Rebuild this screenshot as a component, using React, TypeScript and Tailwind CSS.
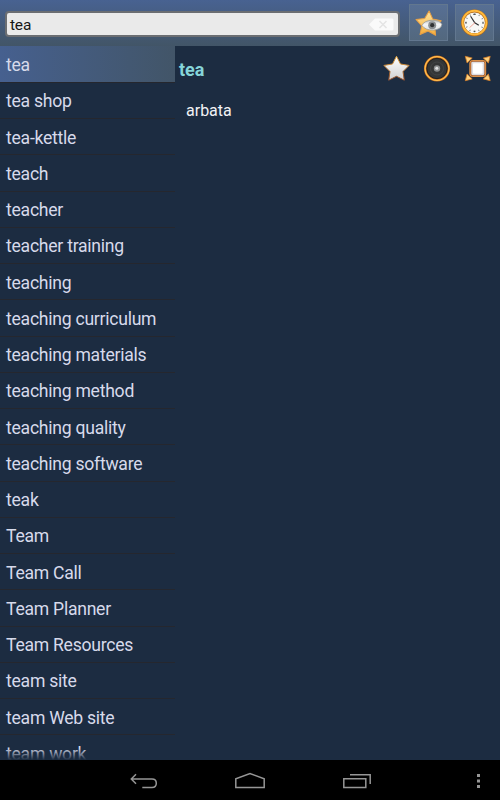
const words: string[] = [
  'tea', 'tea shop', 'tea-kettle', 'teach', 'teacher', 'teacher training', 'teaching',
  'teaching curriculum', 'teaching materials', 'teaching method', 'teaching quality',
  'teaching software', 'teak', 'Team', 'Team Call', 'Team Planner', 'Team Resources',
  'team site', 'team Web site', 'team work',
];

const starPoints = '13,.8 17,8.5 25.6,9.9 19.5,16.1 20.8,24.7 13,20.8 5.2,24.7 6.5,16.1 .4,9.9 9,8.5';

function FavouritesIcon() {
  return (
    <svg width="28" height="28" viewBox="0 0 28 28">
      <defs>
        <linearGradient id="gold" x1="0" y1="0" x2="0" y2="1">
          <stop offset="0" stopColor="#ffe6a0" />
          <stop offset="1" stopColor="#f7ae3a" />
        </linearGradient>
        <linearGradient id="eye" x1="0" y1="0" x2="0" y2="1">
          <stop offset="0" stopColor="#b9bcbd" />
          <stop offset=".4" stopColor="#f4f5f6" />
          <stop offset="1" stopColor="#dfe3e6" />
        </linearGradient>
      </defs>
      <polygon points={starPoints} transform="translate(.4 1.2) rotate(3 13 14)" fill="url(#gold)" stroke="#e9a044" strokeWidth="1" strokeLinejoin="round" />
      <path d="M7 16.6C9 9.6 25 9.6 26.9 15.5C26.2 22.6 11 23 7 16.6Z" fill="url(#eye)" stroke="#929390" strokeWidth=".7" />
      <circle cx="17.2" cy="16.2" r="4" fill="#8c9093" />
      <circle cx="17.2" cy="16.2" r="2.1" fill="#303234" />
    </svg>
  );
}

function HistoryIcon() {
  return (
    <svg width="28" height="28" viewBox="0 0 28 28">
      <circle cx="13.5" cy="13.8" r="11.9" fill="#f8f8f6" stroke="#b86d18" strokeWidth="3" />
      <circle cx="13.5" cy="13.6" r="11.9" fill="none" stroke="#ffb93c" strokeWidth="2" />
      <circle cx="13.5" cy="13.8" r="8.8" fill="none" stroke="#77797a" strokeWidth="1.5" strokeDasharray=".8 3.808" strokeDashoffset=".4" />
      <path d="M12.3 5.3H14.7M5 12.8V14.8M22 12.8V14.8M12.6 22.3H14.4" stroke="#55585a" strokeWidth="1.2" />
      <path d="M17.8 16.2L13.8 13.8L9.6 7.2" fill="none" stroke="#2e3134" strokeWidth="1.2" />
      <path d="M14 13.6L8.5 18.7" stroke="#ef8f80" strokeWidth=".8" />
    </svg>
  );
}

function StarIcon() {
  return (
    <svg width="28" height="28" viewBox="0 0 28 28">
      <defs>
        <linearGradient id="silver" x1="0" y1="0" x2="0" y2="1">
          <stop offset="0" stopColor="#fff" />
          <stop offset="1" stopColor="#cfd0d2" />
        </linearGradient>
        <linearGradient id="rim" x1="0" y1="0" x2="0" y2="1">
          <stop offset="0" stopColor="#e8a63a" />
          <stop offset="1" stopColor="#8e4b2b" />
        </linearGradient>
      </defs>
      <polygon points={starPoints} transform="translate(1.5 .5)" fill="url(#silver)" stroke="url(#rim)" strokeWidth="1" strokeLinejoin="round" />
    </svg>
  );
}

function SpeakerIcon() {
  return (
    <svg width="28" height="28" viewBox="0 0 28 28">
      <circle cx="14" cy="13.5" r="11.8" fill="#343637" stroke="#c96b17" strokeWidth="2.5" />
      <circle cx="14" cy="13.5" r="11.9" fill="none" stroke="#ffc052" strokeWidth="1.3" />
      <circle cx="14" cy="13.5" r="10.2" fill="none" stroke="#17191b" strokeWidth=".8" />
      <circle cx="14" cy="13.5" r="6.5" fill="none" stroke="#454749" strokeWidth=".8" />
      <circle cx="14" cy="13.5" r="3.2" fill="#8c8f90" />
      <circle cx="13.8" cy="13.2" r="1.5" fill="#e0e2e3" />
    </svg>
  );
}

function ExpandIcon() {
  return (
    <svg width="28" height="28" viewBox="0 0 28 28">
      <g fill="#ffd17c" stroke="#d37b25" strokeWidth=".8" strokeLinejoin="round">
        <path d="M1.3 1.3L8.2 3.1L3.1 8Z" />
        <path d="M26.2 1.3L19.3 3.1L24.4 8Z" />
        <path d="M1.3 25.7L8.2 23.9L3.1 19Z" />
        <path d="M26.2 25.7L19.3 23.9L24.4 19Z" />
      </g>
      <rect x="6.4" y="6" width="14.8" height="15" rx="2.2" fill="#dedee3" stroke="#a95d27" strokeWidth="1.7" />
      <rect x="5.9" y="5.5" width="15.8" height="16" rx="2.5" fill="none" stroke="#f1a353" strokeWidth=".8" />
      <rect x="9" y="8.2" width="9.6" height="10.6" rx="1" fill="#fff" />
    </svg>
  );
}

function SearchBar() {
  return (
    <header className="flex h-[46px] shrink-0 bg-linear-to-b from-[#486291] to-[#425567] pl-[5px]">
      <div className="mt-[11px] flex h-[26px] w-[395px] items-center justify-between rounded-[4px] border-2 border-[#6b6e72] bg-[#eaeaea] pr-[4px] pl-[3px]">
        <span className="pt-[2px] text-[15.5px] leading-5 tracking-[-0.2px] text-[#161616]">tea</span>
        <svg width="25" height="13" viewBox="0 0 25 13">
          <path d="M0 6.5L6 .5H23Q24.5 .5 24.5 2V11Q24.5 12.5 23 12.5H6Z" fill="#fafafa" />
          <path d="M10.5 3L17.5 10M17.5 3L10.5 10" stroke="#e4e4e4" strokeWidth="1.5" />
        </svg>
      </div>
      <button className="mt-1 ml-[9px] flex h-[37px] w-[39px] items-center justify-center border border-[#62778f] bg-linear-to-b from-[#576f94] to-[#53687e]">
        <FavouritesIcon />
      </button>
      <button className="mt-1 ml-[7px] flex h-[37px] w-[39px] items-center justify-center border border-[#62778f] bg-linear-to-b from-[#576f94] to-[#53687e]">
        <HistoryIcon />
      </button>
    </header>
  );
}

function WordList() {
  return (
    <nav className="relative h-[714px] w-[175px] shrink-0 overflow-hidden">
      {words.map((word, i) => (
        <div
          key={word}
          className={`flex items-center border-b border-[#25272e] pl-[6px] text-[17.6px] leading-6 tracking-[-0.26px] whitespace-nowrap text-[#d7daeb] ${i === 0 ? 'h-[36.75px] bg-linear-to-r from-[#46608f] to-[#425568] pt-[3px]' : 'h-[36.25px] pt-[2px]'}`}
        >
          {word}
        </div>
      ))}
      <div className="absolute inset-x-0 bottom-0 h-3 bg-linear-to-b from-transparent to-[#1c2c41]" />
    </nav>
  );
}

function Translation() {
  return (
    <main className="flex-1">
      <div className="flex h-[46px] items-center pl-1">
        <h1 className="w-[203px] pt-[2px] text-[18px] leading-6 font-bold text-[#86d5d9]">tea</h1>
        <div className="flex gap-[13px]">
          <StarIcon />
          <SpeakerIcon />
          <ExpandIcon />
        </div>
      </div>
      <p className="mt-[7px] pl-[11px] text-[16px] leading-6 text-[#f2f2f5]">arbata</p>
    </main>
  );
}

function NavigationBar() {
  return (
    <footer className="flex h-10 shrink-0 items-center bg-black pl-[129px]">
      <svg width="30" height="20" viewBox="0 0 30 20" fill="none" stroke="#969696" strokeWidth="1.5">
        <path d="M7 4.3L2.3 9L7 13.8M2.3 9H23Q27.3 9 27.3 13.2Q27.3 17.4 23 17.4H13.3" />
      </svg>
      <svg className="ml-[75px]" width="32" height="20" viewBox="0 0 32 20" fill="none" stroke="#969696" strokeWidth="1.5">
        <path d="M1.8 17.4V8.8L16 3.5L30.2 8.8V17.4Z" />
      </svg>
      <svg className="ml-[76px]" width="30" height="20" viewBox="0 0 30 20" fill="none" stroke="#969696" strokeWidth="1.5">
        <path d="M1.8 8.8H23.8V17.4H1.8ZM8 4.8H28.2V14" />
      </svg>
      <svg className="ml-[103px]" width="8" height="20" viewBox="0 0 8 20" fill="#969696">
        <rect x="2" y="4" width="3" height="3" />
        <rect x="2" y="9.5" width="3" height="3" />
        <rect x="2" y="15" width="3" height="3" />
      </svg>
    </footer>
  );
}

export default function App() {
  return (
    <div className="flex h-[800px] w-[500px] flex-col overflow-hidden bg-[#1c2c41] font-[Roboto,sans-serif]">
      <SearchBar />
      <div className="flex h-[714px]">
        <WordList />
        <Translation />
      </div>
      <NavigationBar />
    </div>
  );
}
